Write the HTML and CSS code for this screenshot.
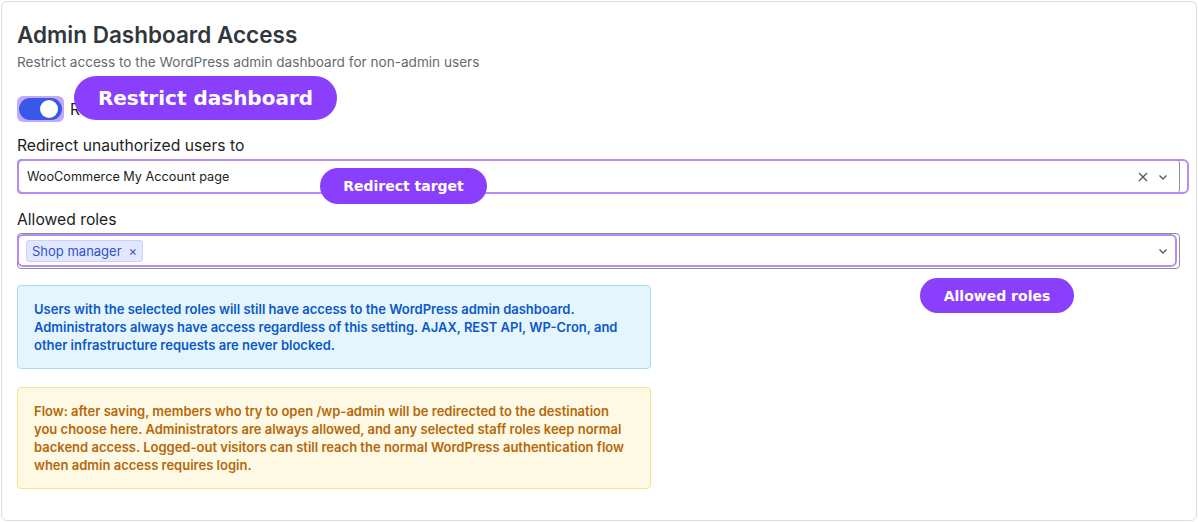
FILE: index.html
```html
<!DOCTYPE html>
<html lang="en">
<head>
    <meta charset="UTF-8">
    <meta name="viewport" content="width=device-width, initial-scale=1.0">
    <title>Admin Dashboard Access</title>
    <link rel="stylesheet" href="styles.css">
</head>
<body>
    <div class="card">
        <h1 class="title">Admin Dashboard Access</h1>
        <p class="subtitle">Restrict access to the WordPress admin dashboard for non-admin users</p>

        <div class="toggle-row">
            <span class="toggle-ring">
                <span class="toggle"><span class="knob"></span></span>
            </span>
            <span class="toggle-label">Restrict dashboard access</span>
            <span class="badge badge-lg badge-restrict">Restrict dashboard</span>
        </div>

        <div class="field">
            <label class="field-label">Redirect unauthorized users to</label>
            <div class="select-wrap">
                <div class="select">
                    <span class="select-value">WooCommerce My Account page</span>
                    <span class="select-icons">
                        <svg width="12" height="12" viewBox="0 0 12 12"><path d="M2 2l8 8M10 2l-8 8" stroke="#50575e" stroke-width="1.3" fill="none"/></svg>
                        <svg width="12" height="12" viewBox="0 0 12 12"><path d="M2.5 4.5L6 8l3.5-3.5" stroke="#50575e" stroke-width="1.3" fill="none"/></svg>
                    </span>
                </div>
                <span class="ring ring-redirect"></span>
                <span class="badge badge-redirect">Redirect target</span>
            </div>
        </div>

        <div class="field field-roles">
            <label class="field-label">Allowed roles</label>
            <div class="select-wrap">
                <div class="select select-multi">
                    <span class="chip">Shop manager <span class="chip-x">×</span></span>
                    <span class="select-icons">
                        <svg width="12" height="12" viewBox="0 0 12 12"><path d="M2.5 4.5L6 8l3.5-3.5" stroke="#50575e" stroke-width="1.3" fill="none"/></svg>
                    </span>
                </div>
                <span class="ring ring-roles"></span>
                <span class="badge badge-roles">Allowed roles</span>
            </div>
        </div>

        <div class="notice notice-info">
            Users with the selected roles will still have access to the WordPress admin dashboard. Administrators always have access regardless of this setting. AJAX, REST API, WP-Cron, and other infrastructure requests are never blocked.
        </div>

        <div class="notice notice-warn">
            Flow: after saving, members who try to open /wp-admin will be redirected to the destination you choose here. Administrators are always allowed, and any selected staff roles keep normal backend access. Logged-out visitors can still reach the normal WordPress authentication flow when admin access requires login.
        </div>
    </div>
</body>
</html>
```

FILE: styles.css
```css
body {
    margin: 0;
    padding: 1px;
    background-color: #ffffff;
    font-family: Inter, "Noto Sans", sans-serif;
    color: #1e1e1e;
}
.card {
    border: 1px solid #dcdcde;
    border-radius: 6px;
    padding: 18px 16px 31px 15px;
    height: 469px;
}
.title {
    margin: 0;
    font-size: 22.5px;
    font-weight: 600;
    line-height: 30px;
    color: #32373c;
}
.subtitle {
    margin: 3px 0 0;
    font-size: 13.6px;
    line-height: 18px;
    color: #646970;
}
.toggle-row {
    position: relative;
    display: flex;
    align-items: center;
    margin-top: 25px;
    height: 26px;
}
.toggle-ring {
    display: inline-flex;
    padding: 2px;
    border-radius: 6px;
    background-color: #c4a8fb;
}
.toggle {
    display: flex;
    align-items: center;
    justify-content: flex-end;
    width: 43px;
    height: 22px;
    padding: 0 4px;
    box-sizing: border-box;
    border-radius: 11px;
    background-color: #3858e9;
}
.knob {
    width: 18px;
    height: 18px;
    border-radius: 50%;
    background-color: #ffffff;
}
.toggle-label {
    margin-left: 6px;
    font-size: 15.7px;
}
.badge {
    position: absolute;
    display: flex;
    align-items: center;
    justify-content: center;
    background-color: #8a3ffc;
    color: #ffffff;
    font-family: "DejaVu Sans", sans-serif;
    font-weight: bold;
    font-size: 14px;
    border-radius: 18px;
}
.badge-lg {
    font-size: 20px;
    border-radius: 22px;
}
.badge-restrict {
    left: 57px;
    top: -20px;
    width: 263px;
    height: 44px;
}
.field {
    margin-top: 14px;
}
.field-roles {
    margin-top: 16px;
}
.field-label {
    display: block;
    font-size: 15.7px;
    line-height: 20px;
    margin-bottom: 3px;
}
.select-wrap {
    position: relative;
}
.select {
    display: flex;
    align-items: center;
    height: 35px;
    box-sizing: border-box;
    padding: 0 10px 0 9px;
    border: 1px solid #8c8f94;
    border-radius: 4px;
    background-color: #ffffff;
    font-size: 12.7px;
}
.select-multi {
    height: 36px;
    padding-left: 8px;
}
.select-value {
    flex: 1;
    color: #1e1e1e;
}
.select-icons {
    margin-left: auto;
    display: flex;
    gap: 8px;
}
.chip {
    display: inline-flex;
    align-items: center;
    height: 20px;
    padding: 0 5px;
    border: 1px solid #c7d2fe;
    border-radius: 3px;
    background-color: #e0e7ff;
    color: #3453c8;
    font-size: 13px;
}
.chip-x {
    margin-left: 7px;
    font-size: 13px;
}
.ring {
    position: absolute;
    left: 0;
    border: 2px solid #b58cf7;
    border-radius: 6px;
    pointer-events: none;
}
.ring-redirect {
    top: 0;
    width: 1168px;
    height: 31px;
}
.ring-roles {
    top: 1px;
    width: 1156px;
    height: 29px;
}
.badge-redirect {
    left: 303px;
    top: 9px;
    width: 167px;
    height: 36px;
}
.badge-roles {
    left: 903px;
    top: 45px;
    width: 154px;
    height: 35px;
}
.notice {
    width: 634px;
    box-sizing: border-box;
    border-radius: 4px;
    font-size: 13px;
    font-weight: 600;
    line-height: 18px;
    padding: 14px 16px;
}
.notice-info {
    margin-top: 16px;
    background-color: #e5f5fd;
    border: 1px solid #a9ddf3;
    color: #0b59c6;
}
.notice-warn {
    margin-top: 18px;
    background-color: #fef9e5;
    border: 1px solid #fbe28a;
    color: #b5680a;
}
```
